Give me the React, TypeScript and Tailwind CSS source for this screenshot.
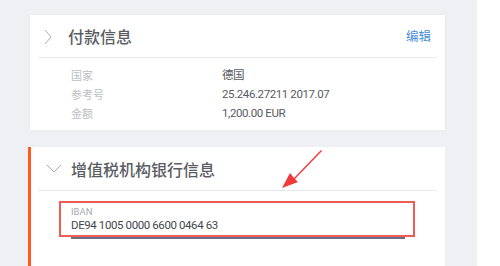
import React from "react";

const cjk = { fontFamily: '"Noto Sans CJK SC", "Noto Sans", sans-serif' };
const num = { fontFamily: 'Roboto, "Noto Sans CJK SC", sans-serif' };

function Row({ label, value }: { label: string; value: string }) {
    return (
        <div className="flex h-[19px] items-center">
            <span className="w-[151px] text-[11px] text-[#bcbfc4]" style={cjk}>{label}</span>
            <span className="text-[11.5px] tracking-[-0.4px] text-[#585c62]" style={num}>{value}</span>
        </div>
    )
}

export default function App() {
    return (
        <div className="flex h-[266px] w-[500px] overflow-hidden bg-white">
            <div className="flex w-[477px] shrink-0 flex-col gap-[17px] bg-[#eff0f4] pl-[30px] pt-[15px]">
                <div className="flex h-[115px] w-[415px] shrink-0 flex-col bg-white shadow-[0_0_3px_rgba(0,0,0,0.05)]">
                    <div className="mx-[8px] flex h-[43px] shrink-0 items-center border-b border-[#e8e9ec] pl-[6px] pr-[6px]">
                        <svg width="8" height="16" viewBox="0 0 8 16" className="mt-[1px]">
                            <path d="M1 1 L7 8 L1 15" fill="none" stroke="#a9abb0" strokeWidth="1" />
                        </svg>
                        <span className="ml-[16px] text-[16px] font-medium text-[#5a5e64]" style={cjk}>付款信息</span>
                        <span className="ml-auto text-[12.5px] text-[#4a90d9]" style={cjk}>编辑</span>
                    </div>
                    <div className="flex flex-col pl-[41px] pt-[8px]">
                        <Row label="国家" value="德国" />
                        <Row label="参考号" value="25.246.27211 2017.07" />
                        <Row label="金额" value="1,200.00 EUR" />
                    </div>
                </div>
                <div className="relative -ml-[2px] flex h-[140px] w-[417px] shrink-0 flex-col border-l-[3px] border-[#ff5a1f] bg-white">
                    <div className="ml-[7px] mr-[8px] flex h-[44px] shrink-0 items-center border-b border-[#e8e9ec] pl-[8px]">
                        <svg width="16" height="9" viewBox="0 0 16 9">
                            <path d="M1 1 L8 8 L15 1" fill="none" stroke="#a9abb0" strokeWidth="1" />
                        </svg>
                        <span className="ml-[9px] text-[16px] font-medium text-[#5a5e64]" style={cjk}>增值税机构银行信息</span>
                    </div>
                    <div className="ml-[28px] mt-[10px] flex h-[36px] w-[356px] shrink-0 flex-col justify-center border-2 border-[#ef5b55] pl-[10px]">
                        <span className="text-[9.5px] leading-[12px] text-[#a8abb1]" style={num}>IBAN</span>
                        <span className="text-[11.5px] leading-[15px] tracking-[-0.4px] text-[#44484e]" style={num}>DE94 1005 0000 6600 0464 63</span>
                    </div>
                    <div className="ml-[40px] h-[2px] w-[334px] shrink-0 bg-[#6b6e85]"></div>
                    <svg className="absolute left-[249px] top-[2px]" width="50" height="42" viewBox="0 0 50 42">
                        <path d="M41 1 L14 29 L10 24 L2 39 L18 33 L15 30 L42 2 Z" fill="#f03a3a" />
                    </svg>
                </div>
            </div>
        </div>
    )
}
